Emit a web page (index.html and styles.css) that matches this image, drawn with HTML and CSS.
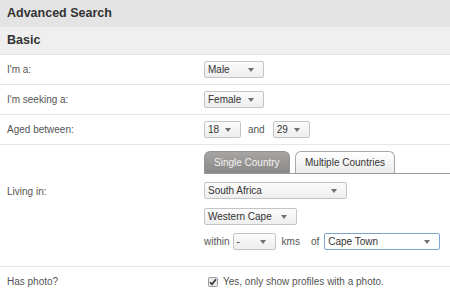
FILE: index.html
```html
<!DOCTYPE html>
<html lang="en">
<head>
  <meta charset="UTF-8">
  <meta name="viewport" content="width=device-width, initial-scale=1.0">
  <title>Advanced Search</title>
  <link rel="stylesheet" href="styles.css">
</head>
<body>
  <div class="search-panel">
    <h1 class="panel-title">Advanced Search</h1>
    <h2 class="section-title">Basic</h2>

    <div class="row">
      <div class="label">I'm a:</div>
      <div class="field">
        <div class="select w-gender">Male</div>
      </div>
    </div>

    <div class="row">
      <div class="label">I'm seeking a:</div>
      <div class="field">
        <div class="select w-gender">Female</div>
      </div>
    </div>

    <div class="row">
      <div class="label">Aged between:</div>
      <div class="field inline">
        <div class="select w-age">18</div>
        <span class="word">and</span>
        <div class="select w-age">29</div>
      </div>
    </div>

    <div class="row row-location">
      <div class="label label-top">Living in:</div>
      <div class="field stack">
        <div class="tabs">
          <div class="tab active">Single Country</div>
          <div class="tab">Multiple Countries</div>
        </div>
        <div class="select w-country">South Africa</div>
        <div class="select w-region">Western Cape</div>
        <div class="inline">
          <span class="word-within">within</span>
          <div class="select w-distance">-</div>
          <span class="word-kms">kms</span>
          <span class="word-of">of</span>
          <div class="select w-city focused">Cape Town</div>
        </div>
      </div>
    </div>

    <div class="row">
      <div class="label">Has photo?</div>
      <div class="field">
        <label class="check">
          <svg class="check-box" width="10" height="10" viewBox="0 0 10 10">
            <rect x="0.5" y="0.5" width="9" height="9" rx="1" fill="#e9e9e9" stroke="#9a9a9a"/>
            <path d="M2 5.2 L4 7.3 L8 2.2" fill="none" stroke="#333" stroke-width="1.6"/>
          </svg>
          Yes, only show profiles with a photo.
        </label>
      </div>
    </div>
  </div>
</body>
</html>
```

FILE: styles.css
```css
body {
  margin: 0;
  font-family: "Liberation Sans", Arial, sans-serif;
  font-size: 10px;
  color: #555;
  background-color: white;
}

.search-panel {
  width: 450px;
}

.panel-title {
  margin: 0;
  height: 27px;
  line-height: 27px;
  padding-left: 7px;
  font-size: 12.5px;
  font-weight: bold;
  color: #333;
  background-color: #e4e4e4;
}

.section-title {
  margin: 0;
  height: 27px;
  line-height: 27px;
  padding-left: 7px;
  font-size: 12.5px;
  font-weight: bold;
  color: #333;
  background-color: #efefef;
  border-bottom: 1px solid #e2e2e2;
}

.row {
  display: grid;
  grid-template-columns: 204px 1fr;
  align-items: center;
  min-height: 29px;
  border-bottom: 1px solid #e6e6e6;
}

.label {
  padding-left: 7px;
  line-height: 12px;
}

.label-top {
  align-self: start;
  padding-top: 41px;
}

.field {
  display: flex;
  align-items: center;
}

.inline {
  display: flex;
  align-items: center;
}

.stack {
  flex-direction: column;
  align-items: flex-start;
  padding: 6px 0 16px;
}

.select {
  position: relative;
  box-sizing: border-box;
  height: 17px;
  line-height: 15px;
  padding-left: 3px;
  color: #333;
  border: 1px solid #c4c4c4;
  border-radius: 2px;
  background: linear-gradient(#fbfbfb, #eeeeee);
}

.select::after {
  content: "";
  position: absolute;
  right: 9px;
  top: 6px;
  border-left: 3px solid transparent;
  border-right: 3px solid transparent;
  border-top: 4px solid #707070;
}

.select.focused {
  border-color: #7ea4d2;
  background: white;
}

.w-gender { width: 60px; }
.w-age { width: 37px; }
.w-country { width: 143px; margin-top: 8px; }
.w-region { width: 93px; margin-top: 9px; }
.w-distance { width: 43px; }
.w-city { width: 116px; }

.stack .inline {
  margin-top: 8px;
}

.word {
  margin: 0 8px 0 7px;
}

.word-within {
  margin-right: 3px;
}

.word-kms {
  margin: 0 11px 0 6px;
}

.word-of {
  margin-right: 5px;
}

.tabs {
  display: flex;
  gap: 5px;
  width: 246px;
  height: 22px;
  border-bottom: 1px solid #9a9a9a;
}

.tab {
  box-sizing: border-box;
  height: 22px;
  line-height: 21px;
  padding: 0 9px;
  color: #333;
  border: 1px solid #a8a8a8;
  border-bottom: none;
  border-radius: 6px 6px 0 0;
  background: linear-gradient(#ffffff, #ececec);
}

.tab.active {
  width: 86px;
  color: #f2f2f2;
  border-color: #949290;
  background: linear-gradient(#a7a5a3, #8a8886);
}

.check {
  display: flex;
  align-items: center;
  gap: 5px;
  margin-left: 4px;
}

.check-box {
  display: block;
}
```
